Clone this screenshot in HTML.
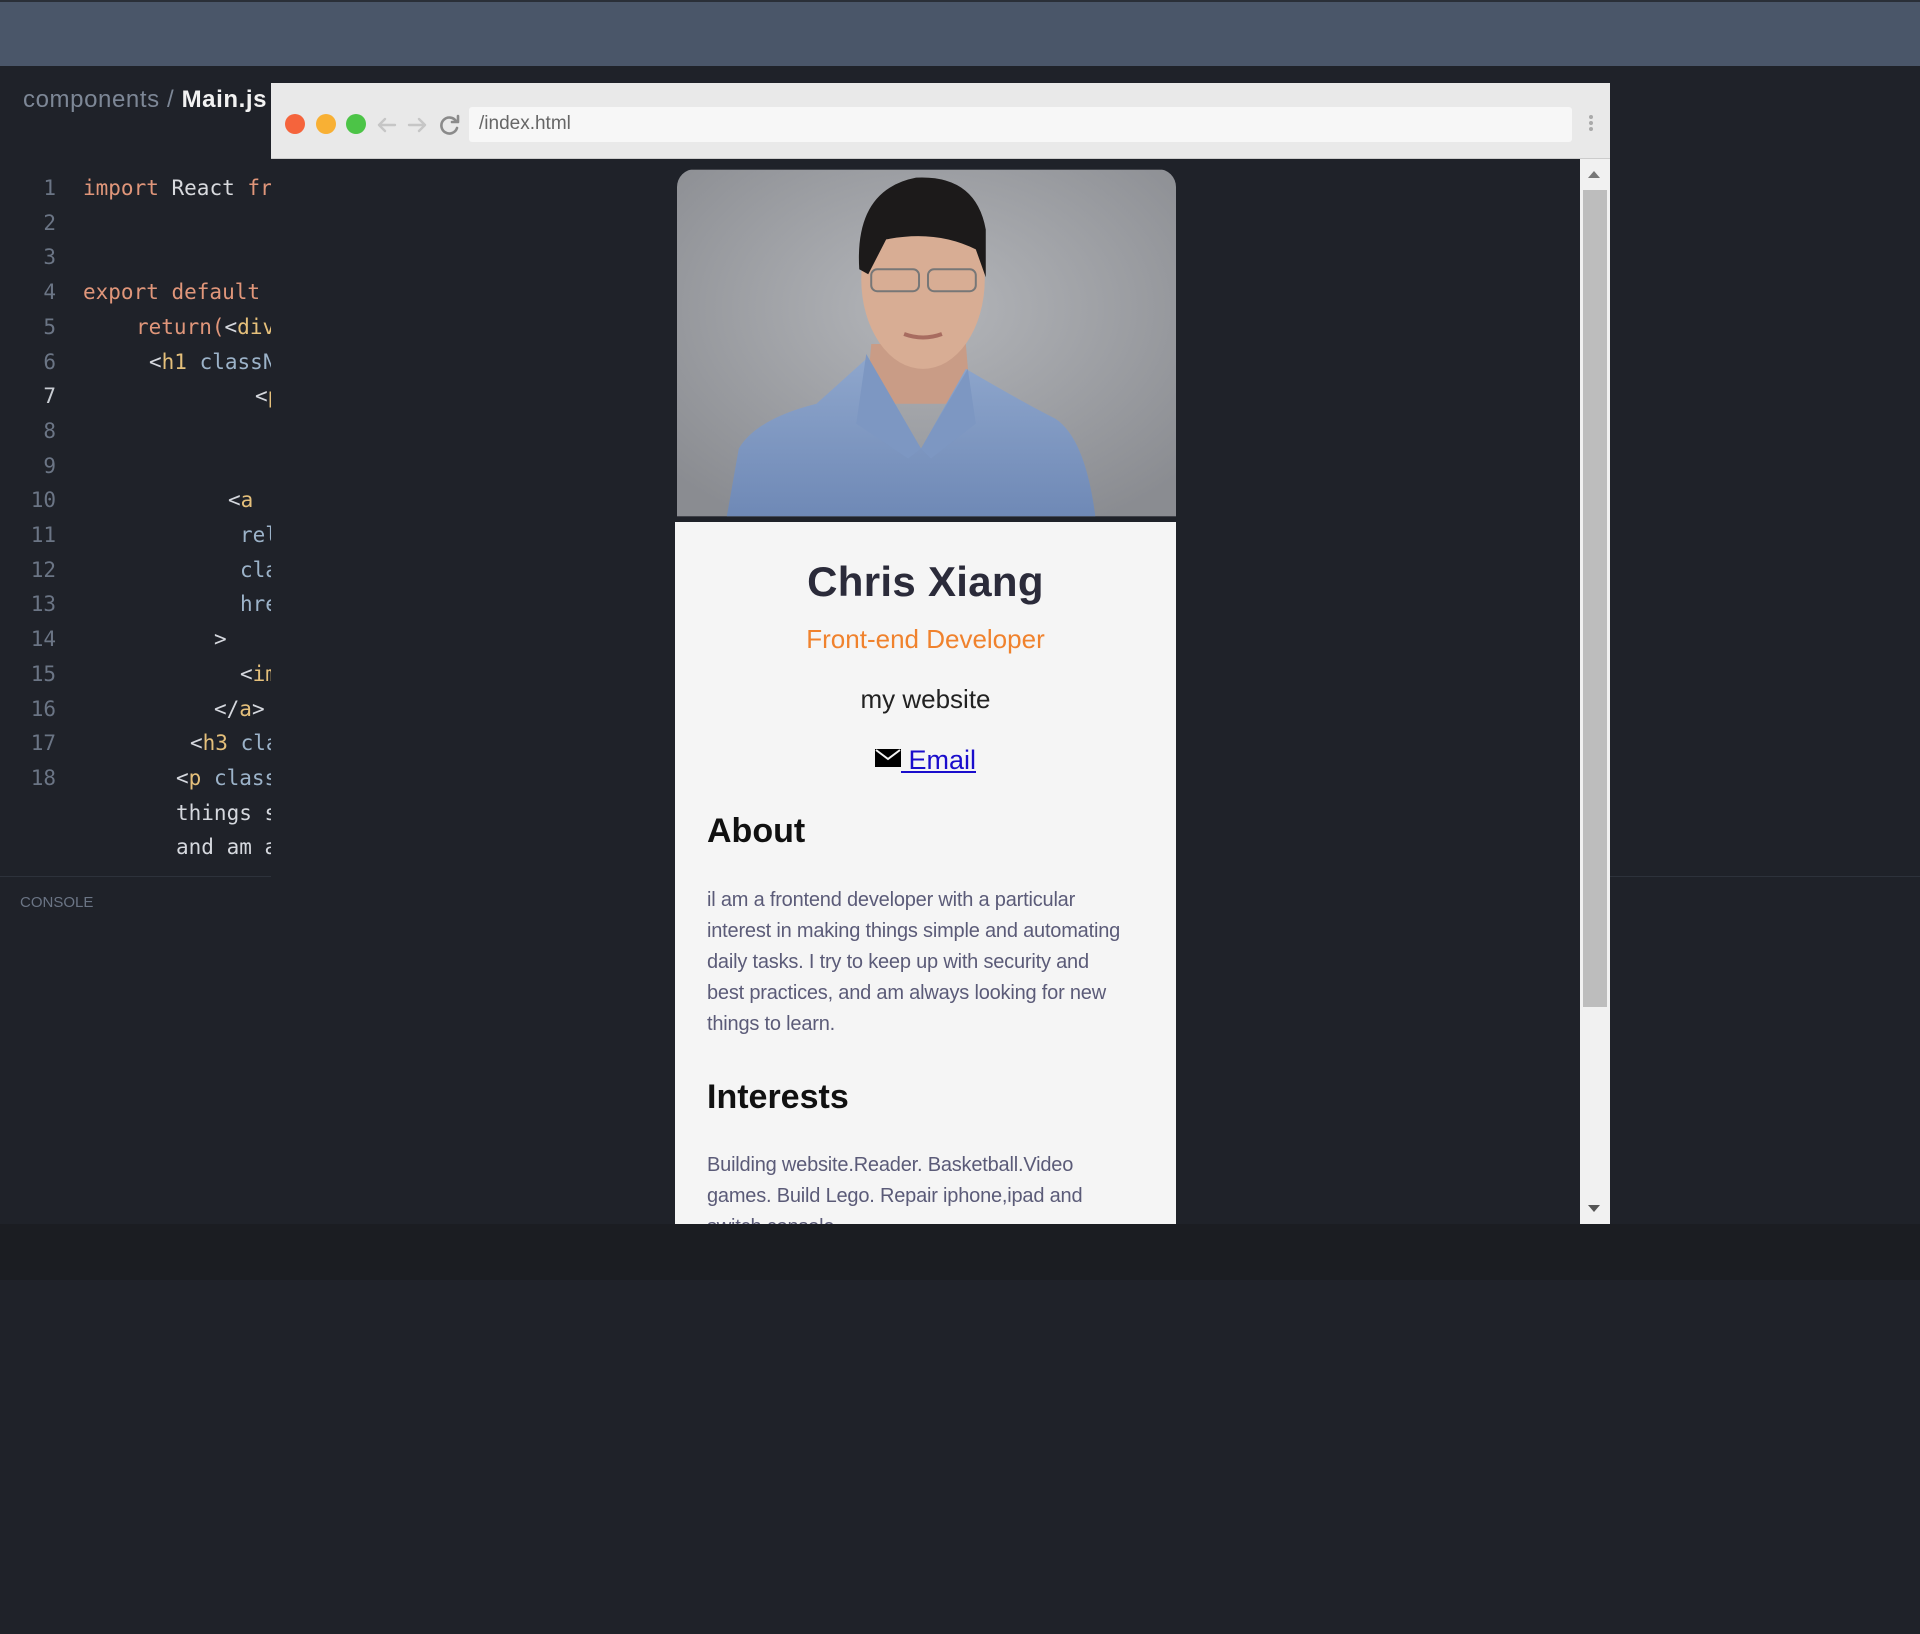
<!DOCTYPE html>
<html style="background:#1f2229"><head><meta charset="utf-8"><style>
*{margin:0;padding:0;box-sizing:border-box}
body{width:1920px;height:1280px;background:#1f2229;position:relative;overflow:hidden;font-family:"Liberation Sans",sans-serif}
.top{position:absolute;left:0;top:0;width:1920px;height:66px;background:#4a5669;border-top:2px solid #2a2f38}
.crumb{position:absolute;left:23px;top:86px;font-size:24px;color:#7d8796;letter-spacing:0.6px}
.crumb b{color:#f2f2f2;font-weight:bold}
.code{position:absolute;left:0;top:171px;width:271px;overflow:hidden;font-family:"DejaVu Sans Mono","Liberation Mono",monospace;font-size:21px;line-height:34.7px;white-space:pre}
.ln{position:absolute;left:0;width:56px;text-align:right;color:#6b7585}
.c{position:absolute;color:#d5d8de}
.k{color:#e0967a}.t{color:#e5c07b}.a{color:#9cb3c9}.w{color:#d8dade}
.div{position:absolute;left:0;top:876px;width:1920px;height:1px;background:#2d323b}
.console{position:absolute;left:20px;top:894px;font-size:15px;color:#6b7585}
.bottom{position:absolute;left:0;top:1224px;width:1920px;height:56px;background:#1b1d22}
.browser{position:absolute;left:271px;top:83px;width:1339px;height:1141px;background:#1f2229}
.tb{position:absolute;left:0;top:0;width:1339px;height:76px;background:#e9e9e9;border-bottom:1px solid #ccc}
.dot{position:absolute;top:31px;width:20px;height:20px;border-radius:50%}
.addr{position:absolute;left:198px;top:24px;width:1103px;height:35px;background:#f7f7f7;border-radius:3px;font-size:19px;color:#666;padding:6px 10px}
.sb{position:absolute;left:1309px;top:76px;width:30px;height:1065px;background:#f1f1f1}
.thumb{position:absolute;left:3px;top:31px;width:24px;height:817px;background:#bdbdbd}
.card{position:absolute;left:404px;top:86px;width:501px;height:1055px;overflow:hidden}
.photo{position:absolute;left:2px;top:0;width:499px;height:348px;border-radius:18px 18px 0 0;overflow:hidden}
.body{position:absolute;left:0;top:353px;width:501px;height:710px;background:#f5f5f5;text-align:center}
h1{position:absolute;left:0;width:501px;top:36px;font-size:42px;color:#2b2b3a;letter-spacing:0.3px}
.role{position:absolute;left:0;width:501px;top:102px;font-size:26px;color:#f0822d}
.web{position:absolute;left:0;width:501px;top:162px;font-size:26px;color:#222}
.email{position:absolute;left:0;width:501px;top:223px;font-size:27px;color:#1a0dcc}
.email span{text-decoration:underline}
h2{position:absolute;left:32px;font-size:34px;color:#111}
.p{position:absolute;left:32px;width:460px;text-align:left;font-size:20px;line-height:31px;color:#5b5b78;white-space:nowrap;letter-spacing:-0.2px}
</style></head><body>
<div class="top"></div>
<div class="crumb">components / <b>Main.js</b></div>
<div class="code">
<div class="ln" style="top:0">1</div><div class="c" style="left:83px;top:0"><span class="k">import</span> <span class="w">React</span> <span class="k">from</span></div>
<div class="ln" style="top:34.7px">2</div>
<div class="ln" style="top:69.4px">3</div>
<div class="ln" style="top:104.1px">4</div><div class="c" style="left:83px;top:104.1px"><span class="k">export default</span></div>
<div class="ln" style="top:138.8px">5</div><div class="c" style="left:136px;top:138.8px"><span class="k">return(</span>&lt;<span class="t">div</span></div>
<div class="ln" style="top:173.5px">6</div><div class="c" style="left:149px;top:173.5px">&lt;<span class="t">h1</span> <span class="a">className</span></div>
<div class="ln" style="top:208.2px;color:#c8ccd2">7</div><div class="c" style="left:255px;top:208.2px">&lt;<span class="t">p</span></div>
<div class="ln" style="top:242.9px">8</div>
<div class="ln" style="top:277.6px">9</div>
<div class="ln" style="top:312.3px">10</div><div class="c" style="left:228px;top:312.3px">&lt;<span class="t">a</span></div>
<div class="ln" style="top:347px">11</div><div class="c a" style="left:240px;top:347px">rel</div>
<div class="ln" style="top:381.7px">12</div><div class="c a" style="left:240px;top:381.7px">class</div>
<div class="ln" style="top:416.4px">13</div><div class="c a" style="left:240px;top:416.4px">href</div>
<div class="ln" style="top:451.1px">14</div><div class="c" style="left:214px;top:451.1px">&gt;</div>
<div class="ln" style="top:485.8px">15</div><div class="c" style="left:240px;top:485.8px">&lt;<span class="t">img</span></div>
<div class="ln" style="top:520.5px">16</div><div class="c" style="left:214px;top:520.5px">&lt;/<span class="t">a</span>&gt;</div>
<div class="ln" style="top:555.2px">17</div><div class="c" style="left:190px;top:555.2px">&lt;<span class="t">h3</span> <span class="a">class</span></div>
<div class="ln" style="top:589.9px">18</div><div class="c" style="left:176px;top:589.9px">&lt;<span class="t">p</span> <span class="a">class</span></div>
<div class="c" style="left:176px;top:624.6px">things s</div>
<div class="c" style="left:176px;top:659.3px">and am a</div>
<div style="height:700px"></div>
</div>
<div class="div"></div>
<div class="console">CONSOLE</div>
<div class="bottom"></div>
<div class="browser">
 <div class="tb">
  <div class="dot" style="left:14px;background:#f5643c"></div>
  <div class="dot" style="left:45px;background:#f8b034"></div>
  <div class="dot" style="left:75px;background:#4cc447"></div>
  <svg style="position:absolute;left:104px;top:30px" width="90" height="24" viewBox="0 0 90 24" fill="none" stroke-linecap="round" stroke-linejoin="round">
   <path d="M20 12H4M10 6L4 12l6 6" stroke="#c6c6c6" stroke-width="2.4"/>
   <path d="M34 12h16M44 6l6 6-6 6" stroke="#c6c6c6" stroke-width="2.4"/>
   <path d="M81 8a8 8 0 1 0 1 7" stroke="#8a8a8a" stroke-width="2.6"/>
   <path d="M83 3v6h-6" stroke="#8a8a8a" stroke-width="2.6"/>
  </svg>
  <div class="addr">/index.html</div>
  <div style="position:absolute;left:1318px;top:32px;width:4px;height:4px;background:#aaa;border-radius:50%;box-shadow:0 6px 0 #aaa,0 12px 0 #aaa"></div>
 </div>
 <div class="sb"><div style="position:absolute;left:8px;top:12px;border:6px solid transparent;border-bottom:7px solid #777;border-top:0"></div><div class="thumb"></div><div style="position:absolute;left:8px;top:1046px;border:6px solid transparent;border-top:7px solid #555;border-bottom:0"></div></div>
 <div class="card">
  <div class="photo">
   <svg width="499" height="348" viewBox="0 0 501 348">
    <defs><radialGradient id="bg" cx="0.5" cy="0.4" r="0.7"><stop offset="0" stop-color="#b4b6ba"/><stop offset="1" stop-color="#8a8c91"/></radialGradient>
    <linearGradient id="sh" x1="0" y1="0" x2="0" y2="1"><stop offset="0" stop-color="#8ea6cc"/><stop offset="1" stop-color="#6f89b6"/></linearGradient></defs>
    <rect width="501" height="348" fill="url(#bg)"/>
    <path d="M195 175 L290 175 L295 235 L190 235Z" fill="#c99c86"/>
    <path d="M50 348 L62 280 Q80 250 140 235 L190 190 L245 280 L290 200 Q350 235 380 250 Q410 270 420 348Z" fill="url(#sh)"/>
    <path d="M190 185 L180 255 L232 290 L245 280Z M292 200 L300 255 L255 290 L245 280Z" fill="#7d97c2"/>
    <ellipse cx="247" cy="110" rx="62" ry="90" fill="#d8ad94"/>
    <path d="M183 100 Q178 20 240 8 Q300 5 310 60 L310 108 L300 80 Q260 60 210 70 L192 105Z" fill="#1c1a1a"/>
    <rect x="195" y="100" width="48" height="22" rx="6" fill="none" stroke="#777" stroke-width="2"/>
    <rect x="252" y="100" width="48" height="22" rx="6" fill="none" stroke="#777" stroke-width="2"/>
    <path d="M228 165 Q247 172 266 165" stroke="#a86c60" stroke-width="4" fill="none"/>
   </svg>
  </div>
  <div class="body">
   <h1>Chris Xiang</h1>
   <div class="role">Front-end Developer</div>
   <div class="web">my website</div>
   <div class="email"><svg width="26" height="18" viewBox="0 0 26 18" style="vertical-align:2px"><rect width="26" height="18" fill="#000"/><path d="M1 1l12 9 12-9" stroke="#f5f5f5" stroke-width="2" fill="none"/></svg><span> Email</span></div>
   <h2 style="top:290px">About</h2>
   <div class="p" style="top:363px">il am a frontend developer with a particular<br>interest in making things simple and automating<br>daily tasks. I try to keep up with security and<br>best practices, and am always looking for new<br>things to learn.</div>
   <h2 style="top:556px">Interests</h2>
   <div class="p" style="top:628px">Building website.Reader. Basketball.Video<br>games. Build Lego. Repair iphone,ipad and<br>switch console</div>
  </div>
 </div>
</div>
</body></html>
